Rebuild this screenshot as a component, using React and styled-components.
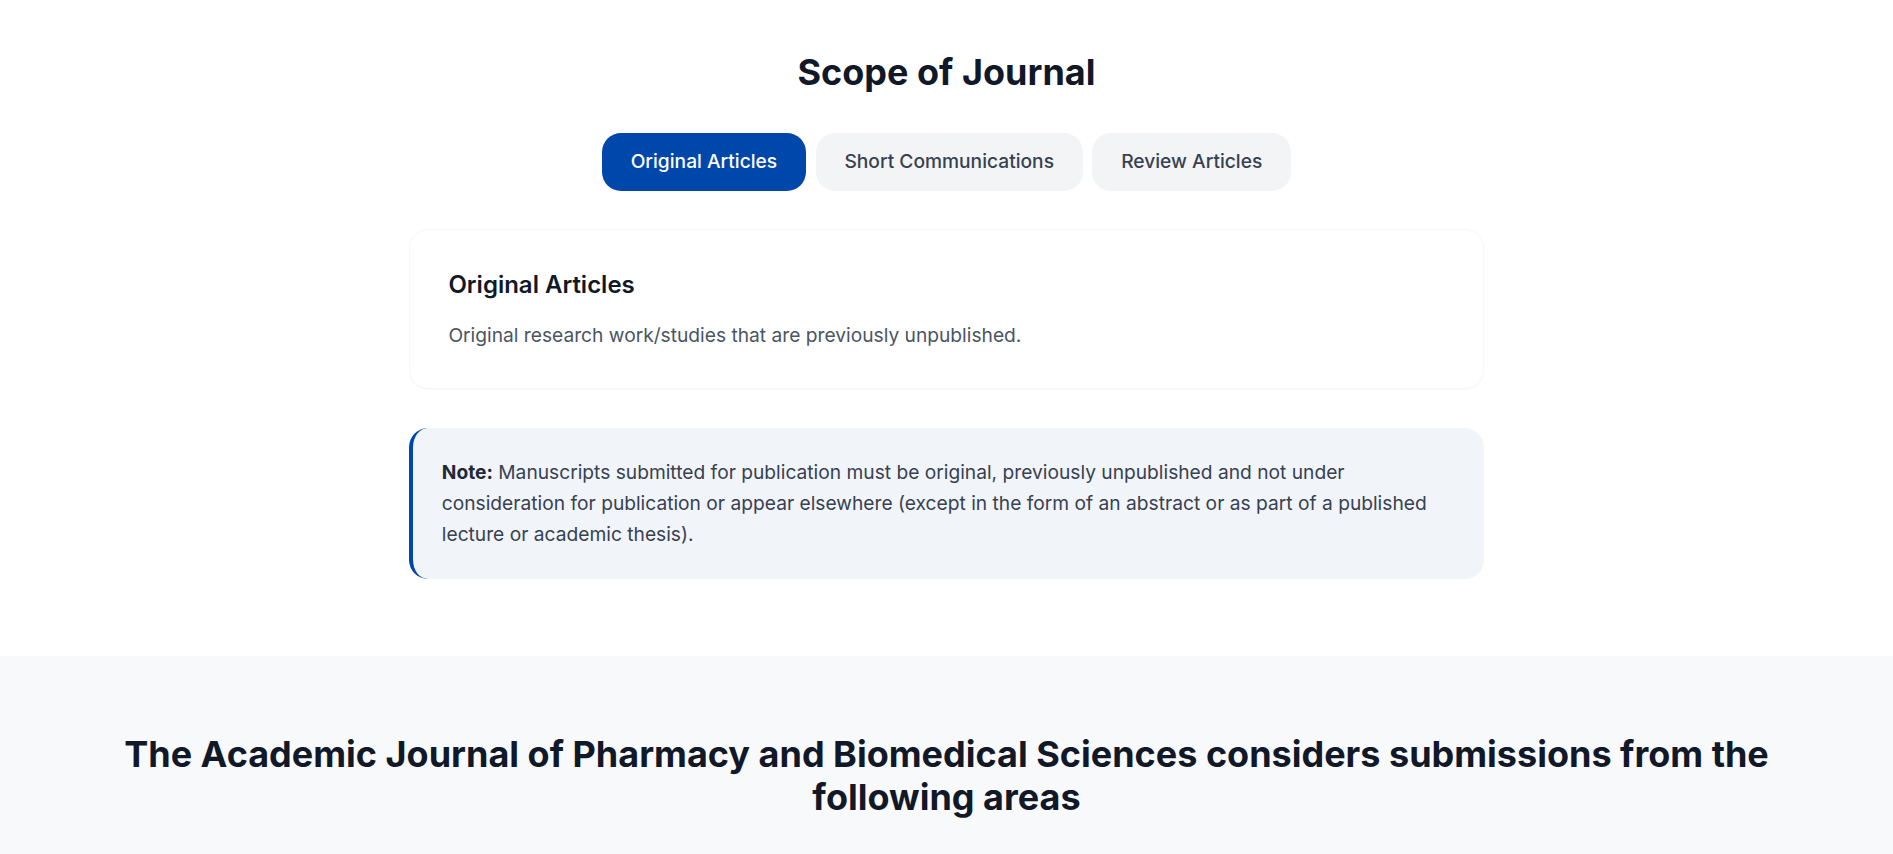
import React, { useState } from "react";
import styled, { createGlobalStyle } from "styled-components";

const COLORS = {
  ink: "#111827",
  gray800: "#1f2937",
  gray700: "#374151",
  gray600: "#4b5563",
  blue: "#0047ab",
  tabIdle: "#f3f4f6",
  noteBg: "#f1f4f9",
  sectionBg: "#f8f9fb",
};

const TABS = [
  {
    id: "original",
    label: "Original Articles",
    text: "Original research work/studies that are previously unpublished.",
  },
  {
    id: "short",
    label: "Short Communications",
    text: "Brief reports of original research findings of immediate interest.",
  },
  {
    id: "review",
    label: "Review Articles",
    text: "Comprehensive reviews of current knowledge on a specific topic.",
  },
];

const GlobalStyle = createGlobalStyle`
  html, body {
    margin: 0;
    padding: 0;
    background: #ffffff;
    font-family: Inter, "Noto Sans", "Liberation Sans", sans-serif;
    -webkit-font-smoothing: antialiased;
  }
  * {
    box-sizing: border-box;
  }
`;

const App = () => {
  const [active, setActive] = useState("original");
  const current = TABS.find((t) => t.id === active);

  return (
    <>
      <GlobalStyle />
      <ScopeSection>
        <Title>Scope of Journal</Title>
        <TabList>
          {TABS.map((tab) => (
            <Tab
              key={tab.id}
              $active={tab.id === active}
              onClick={() => setActive(tab.id)}
            >
              {tab.label}
            </Tab>
          ))}
        </TabList>
        <Column>
          <Card>
            <CardTitle>{current.label}</CardTitle>
            <CardText>{current.text}</CardText>
          </Card>
          <Note>
            <NoteLabel>Note:</NoteLabel> Manuscripts submitted for publication
            must be original, previously unpublished and not under
            consideration for publication or appear elsewhere (except in the
            form of an abstract or as part of a published lecture or academic
            thesis).
          </Note>
        </Column>
      </ScopeSection>
      <AreasSection>
        <AreasHeading>
          The Academic Journal of Pharmacy and Biomedical Sciences considers
          submissions from the following areas
        </AreasHeading>
      </AreasSection>
    </>
  );
};

const ScopeSection = styled.section`
  display: flex;
  flex-direction: column;
  align-items: center;
  padding: 51px 24px 77px;
`;

const Title = styled.h2`
  margin: 0 0 39px;
  font-size: 36px;
  line-height: 43px;
  font-weight: 700;
  color: ${COLORS.ink};
  text-align: center;
`;

const TabList = styled.div`
  display: flex;
  gap: 9.6px;
  margin-bottom: 38.4px;
`;

const Tab = styled.button`
  border: 0;
  cursor: pointer;
  font-family: inherit;
  font-size: 19.2px;
  line-height: 28.8px;
  font-weight: 500;
  padding: 14.4px 28.8px;
  border-radius: 19.2px;
  background: ${(p) => (p.$active ? COLORS.blue : COLORS.tabIdle)};
  color: ${(p) => (p.$active ? "#ffffff" : COLORS.gray700)};
`;

const Column = styled.div`
  width: 1075px;
  display: flex;
  flex-direction: column;
  gap: 38.4px;
`;

const Card = styled.div`
  background: #ffffff;
  border: 1px solid #f7f7f9;
  border-radius: 19.2px;
  box-shadow: 0 1px 2px rgba(0, 0, 0, 0.025);
  padding: 38.4px;
`;

const CardTitle = styled.h3`
  margin: 0 0 19.2px;
  font-size: 24px;
  line-height: 33.6px;
  font-weight: 600;
  color: ${COLORS.ink};
`;

const CardText = styled.p`
  margin: 0;
  font-size: 19.2px;
  line-height: 28.8px;
  color: ${COLORS.gray600};
`;

const Note = styled.p`
  margin: 0;
  background: ${COLORS.noteBg};
  border-left: 4.8px solid ${COLORS.blue};
  border-radius: 19.2px;
  padding: 28.8px;
  font-size: 19.2px;
  line-height: 31.2px;
  color: ${COLORS.gray700};
`;

const NoteLabel = styled.strong`
  font-weight: 700;
  color: ${COLORS.gray800};
`;

const AreasSection = styled.section`
  background: ${COLORS.sectionBg};
  padding: 76.8px 96px 120px;
`;

const AreasHeading = styled.h2`
  margin: 0 auto;
  font-size: 36px;
  line-height: 43.2px;
  font-weight: 700;
  color: ${COLORS.ink};
  text-align: center;
`;

export default App;
